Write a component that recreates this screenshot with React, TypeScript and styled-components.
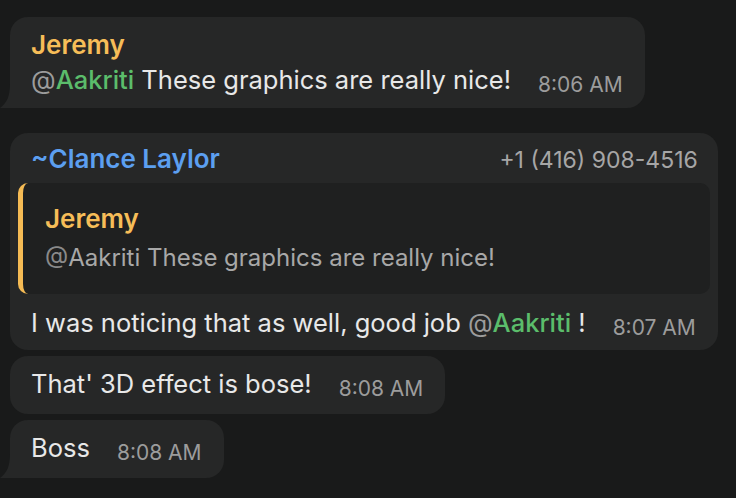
import styled, { createGlobalStyle } from 'styled-components';

const GlobalStyle = createGlobalStyle`
  html, body {
    margin: 0;
    padding: 0;
    background: #191a1a;
  }
  body {
    font-family: Inter, "Noto Sans", "Liberation Sans", sans-serif;
    -webkit-font-smoothing: antialiased;
  }
`;

const Chat = styled.div`
  display: flex;
  flex-direction: column;
  align-items: flex-start;
  padding: 17px 16px 0 10px;
  min-height: 498px;
  box-sizing: border-box;
`;

const Group = styled.div`
  display: flex;
  flex-direction: column;
  align-items: flex-start;
  gap: 6px;
  margin-bottom: 25px;
`;

const Bubble = styled.div<{ $tail?: boolean; $pad?: string }>`
  position: relative;
  display: flex;
  flex-direction: column;
  background: #262727;
  border-radius: 18px;
  border-bottom-left-radius: ${(p) => (p.$tail ? '4px' : '18px')};
  padding: ${(p) => p.$pad ?? '10px 22px 13px 21px'};
  box-sizing: border-box;
`;

const Tail = styled.svg`
  position: absolute;
  left: -10px;
  bottom: 0;
  width: 22px;
  height: 24px;
`;

const Name = styled.div<{ $color: string }>`
  font-size: 26px;
  line-height: 35px;
  font-weight: 600;
  color: ${(p) => p.$color};
`;

const Header = styled.div`
  display: flex;
  justify-content: space-between;
  align-items: baseline;
  gap: 24px;
  padding: 0 12px 0 13px;
`;

const Phone = styled.span`
  font-size: 23px;
  color: #a6a6a6;
`;

const Row = styled.div<{ $inset?: boolean }>`
  display: flex;
  align-items: flex-end;
  gap: 27px;
  padding: ${(p) => (p.$inset ? '0 14px 0 13px' : '0')};
  margin-top: ${(p) => (p.$inset ? '11px' : '0')};
`;

const Text = styled.span`
  font-size: 25.5px;
  line-height: 35px;
  color: #e8e8e8;
  white-space: nowrap;
`;

const At = styled.span<{ $dim?: boolean }>`
  color: ${(p) => (p.$dim ? '#8a8a8a' : '#9c9c9c')};
`;

const Mention = styled.span`
  color: #5bbd6b;
  font-weight: 500;
`;

const Time = styled.span`
  font-size: 21px;
  line-height: 24px;
  color: #9c9c9c;
  white-space: nowrap;
`;

const Quote = styled.div`
  display: flex;
  flex-direction: column;
  margin-top: 7px;
  padding: 18px 20px 19px 22px;
  background: #1f2020;
  border-left: 5px solid #f5bb54;
  border-radius: 10px;
`;

const QuoteText = styled.div`
  margin-top: 5px;
  font-size: 24px;
  line-height: 34px;
  color: #a8a8a8;
  white-space: nowrap;
`;

const BubbleTail = () => (
  <Tail viewBox="0 0 22 24">
    <path d="M10 0 C10 12 7 19 0 24 H22 V0 Z" fill="#262727" />
  </Tail>
);

const App = () => {
  return (
    <>
      <GlobalStyle />
      <Chat>
        <Group>
          <Bubble $tail $pad="10px 22px 11px 21px">
            <Name $color="#f6bd58">Jeremy</Name>
            <Row>
              <Text>
                <At>@</At>
                <Mention>Aakriti</Mention> These graphics are really nice!
              </Text>
              <Time>8:06 AM</Time>
            </Row>
            <BubbleTail />
          </Bubble>
        </Group>

        <Group>
          <Bubble $pad="8px 8px 10px">
            <Header>
              <Name $color="#5c9ff0">~Clance Laylor</Name>
              <Phone>+1 (416) 908-4516</Phone>
            </Header>
            <Quote>
              <Name $color="#f6bd58">Jeremy</Name>
              <QuoteText>
                <At $dim>@</At>Aakriti These graphics are really nice!
              </QuoteText>
            </Quote>
            <Row $inset>
              <Text>
                I was noticing that as well, good job <At>@</At>
                <Mention>Aakriti</Mention> !
              </Text>
              <Time>8:07 AM</Time>
            </Row>
          </Bubble>
          <Bubble>
            <Row>
              <Text>That' 3D effect is bose!</Text>
              <Time>8:08 AM</Time>
            </Row>
          </Bubble>
          <Bubble $tail>
            <Row>
              <Text>Boss</Text>
              <Time>8:08 AM</Time>
            </Row>
            <BubbleTail />
          </Bubble>
        </Group>
      </Chat>
    </>
  );
};

export default App;
